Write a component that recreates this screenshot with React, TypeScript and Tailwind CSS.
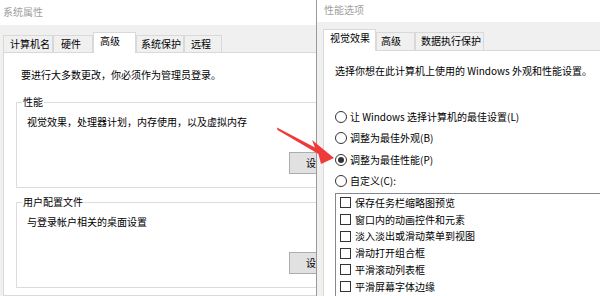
import React from 'react';

const leftTabs = [
    { label: '计算机名', width: 'w-[50px]', pad: 'pl-[6px]' },
    { label: '硬件', width: 'w-[40px]', pad: 'pl-[7px]' },
    { label: '高级', width: 'w-[43px]', pad: 'pl-[6px]', active: true },
    { label: '系统保护', width: 'w-[48px]', pad: 'pl-[4px]' },
    { label: '远程', width: 'w-[38px]', pad: 'pl-[6px]' },
];

const rightTabs = [
    { label: '视觉效果', width: 'w-[53px]', pad: 'pl-[6px]', active: true },
    { label: '高级', width: 'w-[39px]', pad: 'pl-[4px]' },
    { label: '数据执行保护', width: 'w-[69px]', pad: 'pl-[5px]' },
];

const radios = [
    { label: '让 Windows 选择计算机的最佳设置(L)' },
    { label: '调整为最佳外观(B)' },
    { label: '调整为最佳性能(P)', checked: true },
    { label: '自定义(C):' },
];

const effects = [
    '保存任务栏缩略图预览',
    '窗口内的动画控件和元素',
    '淡入淡出或滑动菜单到视图',
    '滑动打开组合框',
    '平滑滚动列表框',
    '平滑屏幕字体边缘',
];

interface TabProps {
    label: string;
    width: string;
    pad: string;
    active?: boolean;
}

function Tab({ label, width, pad, active }: TabProps) {
    if (active) {
        return (
            <div className={`${width} ${pad} relative z-10 h-full bg-white border border-b-0 border-[#d9d9d9] pt-[2px]`}>
                {label}
            </div>
        );
    }
    return (
        <div className={`${width} ${pad} h-[calc(100%-3px)] border border-b-0 border-[#d9d9d9] bg-[#f0f0f0] pt-[2px]`}>
            {label}
        </div>
    );
}

function GroupBox({ title, text, height, top }: { title: string; text: string; height: string; top: string }) {
    return (
        <fieldset className={`${height} ${top} border border-[#dcdcdc] flex flex-col`}>
            <legend className="ml-[5px] px-[1px] leading-[12px]">{title}</legend>
            <div className="pl-[10px] pt-[8px]">{text}</div>
            {/* Settings button, mostly hidden under the other window */}
            <div className="flex justify-end pr-[10px] mt-[24px]">
                <div className="w-[75px] h-[22px] border border-[#adadad] bg-[#e1e1e1] flex items-center justify-center">
                    设置(S)...
                </div>
            </div>
        </fieldset>
    );
}

function SystemProperties() {
    return (
        <div className="w-[391px] h-full flex flex-col bg-[#f0f0f0]">
            <div className="h-[25px] shrink-0 bg-white pl-[3px] pt-[6px] text-[#a0a0a0]">系统属性</div>
            <div className="flex-1 px-[3px] pt-[7px] flex flex-col">
                <div className="h-[21px] flex items-end shrink-0">
                    {leftTabs.map((t) => (
                        <Tab key={t.label} {...t} />
                    ))}
                </div>
                <div className="-mt-px flex-1 border border-[#d9d9d9] bg-white px-[12px] pt-[16px]">
                    <div className="pl-[5px]">要进行大多数更改，你必须作为管理员登录。</div>
                    <GroupBox title="性能" text="视觉效果，处理器计划，内存使用，以及虚拟内存" height="h-[92px]" top="mt-[15px]" />
                    <GroupBox title="用户配置文件" text="与登录帐户相关的桌面设置" height="h-[92px]" top="mt-[8px]" />
                </div>
            </div>
        </div>
    );
}

function PerformanceOptions() {
    return (
        <div className="w-[340px] h-full flex flex-col bg-[#f0f0f0] border-l border-[#9a9a9a]">
            <div className="h-[22px] shrink-0 bg-white pl-[7px] pt-[4px] text-[#a0a0a0]">性能选项</div>
            <div className="flex-1 pl-[6px] pt-[7px] flex flex-col">
                <div className="h-[22px] flex items-end shrink-0">
                    {rightTabs.map((t) => (
                        <Tab key={t.label} {...t} />
                    ))}
                </div>
                <div className="-mt-px flex-1 border border-[#d9d9d9] bg-white pl-[11px] pt-[14px]">
                    <div>选择你想在此计算机上使用的 Windows 外观和性能设置。</div>
                    <div className="mt-[29px] flex flex-col">
                        {radios.map((r) => (
                            <div key={r.label} className="h-[21.5px] flex items-center gap-[3px]">
                                <span className="w-[12px] h-[12px] rounded-full border border-[#333] flex items-center justify-center">
                                    {r.checked && <span className="w-[6px] h-[6px] rounded-full bg-[#333]" />}
                                </span>
                                <span>{r.label}</span>
                            </div>
                        ))}
                    </div>
                    <div className="mt-[1px] border border-[#828790] bg-white pt-[0.5px] pl-[4px] h-[200px]">
                        {effects.map((e) => (
                            <div key={e} className="h-[16.75px] flex items-center gap-[4px]">
                                <span className="w-[11px] h-[11px] border border-[#333]" />
                                <span>{e}</span>
                            </div>
                        ))}
                    </div>
                </div>
            </div>
        </div>
    );
}

export default function App() {
    return (
        <div className="relative w-[600px] h-[296px] overflow-hidden flex bg-white text-black text-[10px] leading-[12px] font-['Noto_Sans_CJK_SC',sans-serif]">
            <div className="w-[316px] h-full shrink-0 overflow-hidden">
                <SystemProperties />
            </div>
            <div className="flex-1 min-w-0 h-full overflow-hidden">
                <PerformanceOptions />
            </div>

            {/* Red pointer arrow drawn over the screenshot */}
            <svg className="absolute inset-0 pointer-events-none" width="600" height="296" viewBox="0 0 600 296">
                <polygon
                    points="277,127.5 315,147.5 312,140 334,158 321,164 318.5,154 277.5,130"
                    fill="#f03a3a"
                />
            </svg>
        </div>
    );
}
